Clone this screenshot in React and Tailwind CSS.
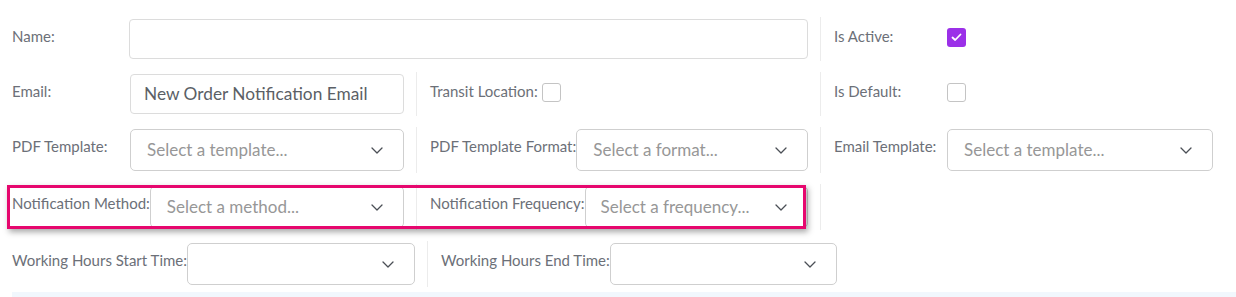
import React from 'react';

const Chevron = () => (
  <svg width="12" height="7" viewBox="0 0 12 7" fill="none" className="shrink-0">
    <polyline points="1,1 6,6 11,1" stroke="#4b4f56" strokeWidth="1.3" strokeLinecap="round" strokeLinejoin="round" />
  </svg>
);

const Label = ({ children, w = '' }) => (
  <label className={`pt-[7px] text-[15px] leading-5 text-[#6c7078] whitespace-nowrap shrink-0 ${w}`}>{children}</label>
);

const Select = ({ placeholder, className = '', pl = 'pl-4' }) => (
  <div className={`h-[42px] flex items-center justify-between ${pl} pr-5 border border-[#cfcfcf] rounded-[5px] bg-white ${className}`}>
    <span className="text-[17px] text-[#979797] whitespace-nowrap">{placeholder}</span>
    <Chevron />
  </div>
);

const Check = ({ checked }) =>
  checked ? (
    <span className="mt-[9px] w-[19px] h-[19px] rounded-[3px] bg-[#9b30e8] flex items-center justify-center shrink-0">
      <svg width="11" height="9" viewBox="0 0 11 9" fill="none">
        <polyline points="1.5,4.5 4.2,7 9.5,1.5" stroke="white" strokeWidth="1.8" strokeLinecap="round" strokeLinejoin="round" />
      </svg>
    </span>
  ) : (
    <span className="mt-[9px] w-[19px] h-[19px] rounded-[3px] border border-[#c4c4c4] bg-white shrink-0" />
  );

const Cell = ({ children, className = '' }) => (
  <div className={`flex items-start py-[2px] border-r border-[#ececec] ${className}`}>{children}</div>
);

export default function App() {
  return (
    <div className="relative w-[1236px] h-[297px] bg-white font-['Lato',sans-serif] overflow-hidden">
      <div className="pt-[17px] flex flex-col gap-[11px]">
        {/* row 1 */}
        <div className="flex">
          <Cell className="w-[821px] pl-3 pr-3">
            <Label w="w-[117px]">Name:</Label>
            <div className="flex-1 h-[40px] border border-[#dcdcdc] rounded-[4px]" />
          </Cell>
          <div className="flex items-start py-[2px] pl-[13px]">
            <Label w="w-[113px]">Is Active:</Label>
            <Check checked />
          </div>
        </div>

        {/* row 2 */}
        <div className="flex">
          <Cell className="w-[417px] pl-3 pr-3">
            <Label w="w-[118px]">Email:</Label>
            <div className="flex-1 h-[40px] border border-[#dcdcdc] rounded-[4px] flex items-center pl-[13px]">
              <span className="text-[17.3px] text-[#5b5f66]">New Order Notification Email</span>
            </div>
          </Cell>
          <Cell className="w-[404px] pl-[13px] pr-3 gap-1">
            <Label>Transit Location:</Label>
            <Check />
          </Cell>
          <div className="flex items-start py-[2px] pl-[13px]">
            <Label w="w-[113px]">Is Default:</Label>
            <Check />
          </div>
        </div>

        {/* row 3 */}
        <div className="flex">
          <Cell className="w-[417px] pl-3 pr-3">
            <Label w="w-[118px]">PDF Template:</Label>
            <Select className="flex-1" placeholder="Select a template..." />
          </Cell>
          <Cell className="w-[404px] pl-[13px] pr-3">
            <Label>PDF Template Format:</Label>
            <Select className="flex-1" placeholder="Select a format..." />
          </Cell>
          <div className="flex items-start py-[2px] pl-[13px]">
            <Label w="w-[113px]">Email Template:</Label>
            <Select className="w-[266px]" placeholder="Select a template..." />
          </div>
        </div>

        {/* row 4 */}
        <div className="flex">
          <Cell className="w-[417px] pl-3 pr-3">
            <Label w="min-w-[118px]">Notification Method:</Label>
            <Select className="flex-1" pl="pl-[16px]" placeholder="Select a method..." />
          </Cell>
          <Cell className="w-[404px] pl-[13px] pr-3">
            <Label>Notification Frequency:</Label>
            <Select className="flex-1" pl="pl-[15px]" placeholder="Select a frequency..." />
          </Cell>
        </div>

        {/* row 5 */}
        <div className="flex">
          <Cell className="pl-3 pr-3">
            <Label>Working Hours Start Time:</Label>
            <Select className="w-[228px]" placeholder="" />
          </Cell>
          <div className="flex items-start py-[2px] pl-[13px]">
            <Label>Working Hours End Time:</Label>
            <Select className="w-[227px]" placeholder="" />
          </div>
        </div>
      </div>

      <div className="mt-[5px] ml-3 h-[10px] bg-[#f1f7fd]" />

      {/* highlight annotation */}
      <div className="absolute left-[7px] top-[185px] w-[799px] h-[44px] border-[3px] border-[#e6076e] shadow-[2px_3px_6px_rgba(0,0,0,0.35)] pointer-events-none" />
    </div>
  );
}
